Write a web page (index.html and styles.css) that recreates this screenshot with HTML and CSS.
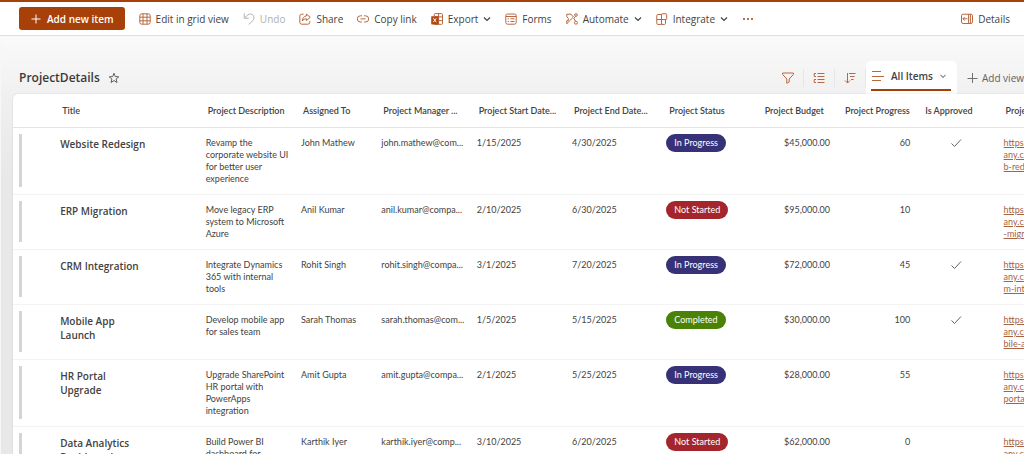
FILE: index.html
```
<!DOCTYPE html>
<html lang="en">
<head>
<meta charset="utf-8">
<title>ProjectDetails</title>
<link rel="stylesheet" href="styles.css">
</head>
<body>
<header class="toolbar">
  <button class="primary"><svg class="icon" viewBox="0 0 12 12"><path d="M6 1.5v9M1.5 6h9"/></svg>Add new item</button>
  <button class="cmd"><svg class="icon" viewBox="0 0 12 12"><rect x=".8" y=".8" width="10.4" height="10.4" rx="2"/><path d="M4 .8v10.400M8 .8v10.400M.8 4.200h10.400M.8 7.800h10.400"/></svg>Edit in grid view</button>
  <button class="cmd" disabled><svg class="icon" viewBox="0 0 12 12"><path d="M1.200 .5v4.700h4.500M1.400 5L4.800 2C6.600.4 9 .7 10.200 2.300s1 3.700-.4 5.200L5.800 11.500"/></svg>Undo</button>
  <button class="cmd"><svg class="icon" viewBox="0 0 12 12"><path d="M4.600 1.200H2.800a2 2 0 0 0-2 2v6a2 2 0 0 0 2 2h6a2 2 0 0 0 2-2V8.200M7.400 1l3.800 3.300-3.800 3.300V5.800C5.600 5.700 4.300 6.500 3.200 8c.3-2.700 1.700-4.800 4.200-5.100z"/></svg>Share</button>
  <button class="cmd"><svg class="icon" viewBox="0 0 12 12"><path d="M5 2.800H3.400a3.100 3.100 0 0 0 0 6.200H5M7 2.800h1.600a3.100 3.100 0 0 1 0 6.200H7M3.500 5.900h5"/></svg>Copy link</button>
  <button class="cmd"><svg class="icon" viewBox="0 0 12 12"><path d="M3.300 3V1.500a.9.9 0 0 1 .9-.9h6.400a.9.900 0 0 1 .9.900v8.900a.9.900 0 0 1-.9.900H3.200M7.600.6v10.700M4 3.900h7.500M7 7.600h4.500"/><rect class="solid" x=".2" y="3.200" width="7.200" height="8.200" rx=".6"/><path class="mark" d="M2.300 5.200l3 4M5.300 5.200l-3 4"/></svg>Export<svg class="chev" viewBox="0 0 8 8"><path d="M1 2.500l3 3 3-3"/></svg></button>
  <button class="cmd"><svg class="icon" viewBox="0 0 12 12"><rect x=".8" y="1" width="10.400" height="10.200" rx="1.800"/><path d="M.8 3.500h10.400M5.500 5.800h4M5.500 8.500h4M2.700 5.800h1.200M2.700 8.500h1.200" /></svg>Forms</button>
  <button class="cmd"><svg class="icon" viewBox="0 0 12 12"><path d="M.8 1.200h4.200L7.400 4 3.200 8.200.8 10.800V7.600h1.500V5.500L.8 3.600zM9.400 3.400L8 5.300l1.400 2.900"/><circle cx="10" cy="2" r="1.300"/><circle cx="9.900" cy="9.700" r="1.500"/></svg>Automate<svg class="chev" viewBox="0 0 8 8"><path d="M1 2.500l3 3 3-3"/></svg></button>
  <button class="cmd"><svg class="icon" viewBox="0 0 12 12"><path d="M1.800 1.500h3.700v9.900H1.800a1 1 0 0 1-1-1V2.500a1 1 0 0 1 1-1zM.8 6.500h8.700v3.900a1 1 0 0 1-1 1h-3"/><rect x="5.500" y=".8" width="5.200" height="5.700" rx=".7"/></svg>Integrate<svg class="chev" viewBox="0 0 8 8"><path d="M1 2.500l3 3 3-3"/></svg></button>
  <button class="cmd" aria-label="More"><svg class="icon dots" viewBox="0 0 12 12"><circle cx="2" cy="6" r="1"/><circle cx="6" cy="6" r="1"/><circle cx="10" cy="6" r="1"/></svg></button>
  <button class="cmd details"><svg class="icon" viewBox="0 0 12 12"><rect x=".5" y="1.200" width="11" height="9.300" rx="1.600"/><path d="M7.600 1.200v9.300M9.400 1.200v9.300M2 5.800h4.500M3.700 4L1.900 5.800l1.800 1.800"/></svg>Details</button>
</header>
<main class="page">
  <div class="viewbar">
    <h1>ProjectDetails</h1>
    <button class="star" aria-label="Favorite"><svg class="icon" viewBox="0 0 12 12"><path d="M6 1.300l1.300 3.300 3.500.2-2.700 2.200.9 3.500L6 8.600l-3 1.900.9-3.500L1.200 4.800l3.500-.2z"/></svg></button>
    <div class="tools">
      <button class="tool" aria-label="Filter"><svg class="icon" viewBox="0 0 12 12"><path d="M.6 1h10.800v1.400L7.200 7v3L4.800 11.300V7L.6 2.400z"/></svg></button>
      <button class="tool" aria-label="Group"><svg class="icon" viewBox="0 0 12 12"><path d="M4.500 1.500h7M4.500 4.500h7M4.500 7.500h7M4.500 10.500h7M3 1.500H1.200v3H3M3 7.500H1.200v3H3"/></svg></button>
      <button class="tool" aria-label="Sort"><svg class="icon" viewBox="0 0 12 12"><path d="M3.500 1v10M1 8.500L3.500 11 6 8.500M5 1.500h6.600M6 4.500h4.600M7 7.500h2.600"/></svg></button>
    </div>
    <button class="tab"><svg class="icon wide" viewBox="0 0 14 12"><path d="M1 1.500h9M1 6.500h12M1 10.500h9"/></svg>All Items<svg class="chev small" viewBox="0 0 8 8"><path d="M1.500 2.800L4 5.300l2.500-2.500"/></svg></button>
    <button class="add"><svg class="icon" viewBox="0 0 12 12"><path d="M6.500 1v10M1.500 6.500h10"/></svg>Add view</button>
  </div>
  <div class="list">
    <table>
      <colgroup><col class="c-bar"><col class="c-title"><col class="c-mid"><col class="c-small"><col class="c-mid"><col class="c-mid"><col class="c-mid"><col class="c-mid"><col class="c-small"><col class="c-small"><col class="c-small"><col class="c-mid"></colgroup>
      <thead>
        <tr><th></th><th>Title</th><th>Project Description</th><th>Assigned To</th><th>Project Manager ...</th><th>Project Start Date...</th><th>Project End Date...</th><th>Project Status</th><th>Project Budget</th><th>Project Progress</th><th>Is Approved</th><th>Project Link</th></tr>
      </thead>
      <tbody>
        <tr><td class="bar"></td><td class="name">Website Redesign</td><td>Revamp the corporate website UI for better user experience</td><td>John Mathew</td><td class="mail">john.mathew@com...</td><td>1/15/2025</td><td>4/30/2025</td><td class="status"><span class="pill progress">In Progress</span></td><td class="num">$45,000.00</td><td class="num">60</td><td class="check"><svg class="icon" viewBox="0 0 12 12"><path d="M1.500 6.500l3 3 6.500-7"/></svg></td><td class="link"><a href="#">https://comp<br>any.com/we<br>b-redesign</a></td></tr>
        <tr><td class="bar"></td><td class="name">ERP Migration</td><td>Move legacy ERP system to Microsoft Azure</td><td>Anil Kumar</td><td class="mail">anil.kumar@compa...</td><td>2/10/2025</td><td>6/30/2025</td><td class="status"><span class="pill stopped">Not Started</span></td><td class="num">$95,000.00</td><td class="num">10</td><td></td><td class="link"><a href="#">https://comp<br>any.com/erp<br>-migration</a></td></tr>
        <tr><td class="bar"></td><td class="name">CRM Integration</td><td>Integrate Dynamics 365 with internal tools</td><td>Rohit Singh</td><td class="mail">rohit.singh@compa...</td><td>3/1/2025</td><td>7/20/2025</td><td class="status"><span class="pill progress">In Progress</span></td><td class="num">$72,000.00</td><td class="num">45</td><td class="check"><svg class="icon" viewBox="0 0 12 12"><path d="M1.500 6.500l3 3 6.500-7"/></svg></td><td class="link"><a href="#">https://comp<br>any.com/cr<br>m-integration</a></td></tr>
        <tr><td class="bar"></td><td class="name">Mobile App Launch</td><td>Develop mobile app for sales team</td><td>Sarah Thomas</td><td class="mail">sarah.thomas@com...</td><td>1/5/2025</td><td>5/15/2025</td><td class="status"><span class="pill done">Completed</span></td><td class="num">$30,000.00</td><td class="num">100</td><td class="check"><svg class="icon" viewBox="0 0 12 12"><path d="M1.500 6.500l3 3 6.500-7"/></svg></td><td class="link"><a href="#">https://comp<br>any.com/mo<br>bile-app</a></td></tr>
        <tr><td class="bar"></td><td class="name">HR Portal Upgrade</td><td>Upgrade SharePoint HR portal with PowerApps integration</td><td>Amit Gupta</td><td class="mail">amit.gupta@compa...</td><td>2/1/2025</td><td>5/25/2025</td><td class="status"><span class="pill progress">In Progress</span></td><td class="num">$28,000.00</td><td class="num">55</td><td></td><td class="link"><a href="#">https://comp<br>any.com/hr-<br>portal</a></td></tr>
        <tr><td class="bar"></td><td class="name">Data Analytics Dashboard</td><td>Build Power BI dashboard for management reporting</td><td>Karthik Iyer</td><td class="mail">karthik.iyer@comp...</td><td>3/10/2025</td><td>6/20/2025</td><td class="status"><span class="pill stopped">Not Started</span></td><td class="num">$62,000.00</td><td class="num">0</td><td></td><td class="link"><a href="#">https://comp<br>any.com/da<br>ta-analytics</a></td></tr>
      </tbody>
    </table>
  </div>
</main>
</body>
</html>
```
FILE: styles.css
```
* { box-sizing: border-box; }
html, body { height: 100%; }
body {
  margin: 0;
  display: flex;
  flex-direction: column;
  overflow: hidden;
  border-top: 2px solid #a74109;
  background: #fff;
  color: #424242;
  font: 9px/12px "Open Sans", "Noto Sans", sans-serif;
}
button {
  display: flex;
  align-items: center;
  flex: none;
  margin: 0;
  padding: 0;
  border: 0;
  background: none;
  color: inherit;
  font: inherit;
  white-space: nowrap;
}
.icon, .chev {
  flex: none;
  width: 12px;
  height: 12px;
  fill: none;
  stroke: #b8683f;
  stroke-width: 1;
}
.chev { width: 8px; height: 8px; stroke: #424242; stroke-width: 1.2; }

.toolbar {
  display: flex;
  flex: none;
  align-items: center;
  gap: 14px;
  height: 34px;
  padding: 0 14px 0 19px;
  border-bottom: 1px solid #dedede;
  font-size: 10px;
}
.cmd { gap: 5px; }
.cmd:disabled { color: #b0b0b0; }
.cmd:disabled .icon { stroke: #b0b0b0; }
.details { margin-left: auto; }
.primary {
  gap: 5px;
  height: 23px;
  padding: 0 11px;
  border-radius: 3px;
  background: #a74109;
  color: #fff;
  font-weight: 600;
}
.primary .icon { stroke: #fff; }
.icon .solid { fill: #b0450f; stroke: none; }
.icon .mark { stroke: #fff; }
.dots { fill: #a74109; stroke: none; }

.page {
  display: flex;
  flex: 1;
  flex-direction: column;
  min-height: 0;
  border-left: 1px solid #f7f7f7;
  background: linear-gradient(#fafafa, #f0f0f0 60px, #e8e8e8 140px);
}
.viewbar {
  display: flex;
  flex: none;
  align-items: center;
  height: 58px;
  padding: 25px 0 0 18px;
  font-size: 10px;
}
h1 { margin: 0 8px 0 0; font-size: 12px; line-height: 18px; font-weight: 600; color: #3a3a3a; }
.star .icon { stroke: #616161; }
.tools { display: flex; margin-left: auto; }
.tool { justify-content: center; width: 31px; height: 18px; border-right: 1px solid #e6e6e6; }
.tab {
  gap: 6px;
  height: 33px;
  padding: 0 10px 3px 5px;
  border-radius: 5px 5px 0 0;
  background: linear-gradient(#a74109, #a74109) no-repeat 5px 28px / calc(100% - 11px) 2px, #fff;
  font-weight: 600;
}
.wide { width: 14px; }
.chev.small { stroke: #8a8a8a; }
.add { gap: 4px; padding: 0 0 0 9px; color: #616161; }
.add .icon { stroke: #707070; }

.list {
  flex: 1;
  min-height: 0;
  margin-left: 12px;
  overflow: hidden;
  border-top-left-radius: 5px;
  background: #fff;
  box-shadow: 0 0 2px #0002;
}
table {
  width: 1080px;
  border-collapse: separate;
  border-spacing: 0;
  table-layout: fixed;
  font-family: Lato, "Open Sans", sans-serif;
}
.c-bar { width: 41px; }
.c-title { width: 145px; }
.c-mid { width: 95px; }
.c-small { width: 80px; }
th {
  height: 34px;
  padding: 0 0 0 8px;
  border-bottom: 1px solid #e3e3e3;
  font-weight: 600;
  text-align: left;
  white-space: nowrap;
}
td { padding: 9px 6px; border-bottom: 1px solid #f3f3f3; vertical-align: top; }
.bar { background: linear-gradient(#d4d4d4, #d4d4d4) no-repeat 6px 6px / 3px calc(100% - 13px); }
.name { padding-right: 52px; font: 600 10px/14px "Open Sans", "Noto Sans", sans-serif; }
.mail { padding-right: 0; white-space: nowrap; }
.status { padding: 6px 5px; }
.num { padding-right: 7px; text-align: right; }
.check { padding-right: 8px; text-align: center; }
.check .icon { display: block; margin: 0 auto; stroke: #616161; }
.link { white-space: nowrap; }
.link a { color: #a8623f; text-decoration: underline; }
.pill {
  display: inline-block;
  height: 18px;
  padding: 0 8px;
  border-radius: 9px;
  color: #fff;
  line-height: 18px;
}
.progress { background: #373277; }
.stopped { background: #a4262c; }
.done { background: #498205; }
```
